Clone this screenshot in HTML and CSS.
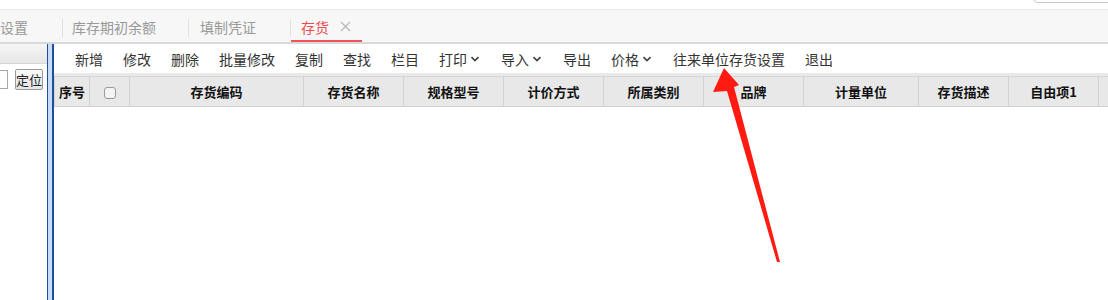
FILE: index.html
```html
<!DOCTYPE html>
<html lang="zh">
<head>
  <meta charset="UTF-8">
  <title>存货</title>
  <link rel="stylesheet" href="styles.css">
</head>
<body>
  <div class="topbar">
    <div class="search-box"></div>
  </div>

  <div class="tabs">
    <div class="tab first">设置</div>
    <span class="sep"></span>
    <div class="tab">库存期初余额</div>
    <span class="sep"></span>
    <div class="tab third">填制凭证</div>
    <span class="sep"></span>
    <div class="tab active">存货<svg class="close" width="11" height="11" viewBox="0 0 11 11"><path d="M1 1 L10 10 M10 1 L1 10" stroke="#bbb" stroke-width="1.4"/></svg></div>
  </div>

  <div class="workspace">
    <div class="side">
      <div class="side-head"></div>
      <div class="side-row">
        <input type="text" class="side-input">
        <button class="btn-locate">定位</button>
      </div>
    </div>

    <div class="splitter"></div>

    <div class="main">
      <div class="toolbar">
        <span class="tool">新增</span>
        <span class="tool">修改</span>
        <span class="tool">删除</span>
        <span class="tool">批量修改</span>
        <span class="tool">复制</span>
        <span class="tool">查找</span>
        <span class="tool">栏目</span>
        <span class="tool">打印<svg class="caret" width="11" height="6" viewBox="0 0 11 6"><path d="M1.5 1.2 L5 4.5 L8.5 1.2" fill="none" stroke="#444" stroke-width="1.7"/></svg></span>
        <span class="tool">导入<svg class="caret" width="11" height="6" viewBox="0 0 11 6"><path d="M1.5 1.2 L5 4.5 L8.5 1.2" fill="none" stroke="#444" stroke-width="1.7"/></svg></span>
        <span class="tool">导出</span>
        <span class="tool">价格<svg class="caret" width="11" height="6" viewBox="0 0 11 6"><path d="M1.5 1.2 L5 4.5 L8.5 1.2" fill="none" stroke="#444" stroke-width="1.7"/></svg></span>
        <span class="tool">往来单位存货设置</span>
        <span class="tool">退出</span>
      </div>

      <table class="grid">
        <colgroup>
          <col class="c-no">
          <col class="c-chk">
          <col class="c-code">
          <col class="c-100">
          <col class="c-100">
          <col class="c-100">
          <col class="c-100">
          <col class="c-100">
          <col class="c-unit">
          <col class="c-90">
          <col class="c-90">
          <col class="c-100">
        </colgroup>
        <thead>
          <tr>
            <th>序号</th>
            <th><span class="chk"></span></th>
            <th>存货编码</th>
            <th>存货名称</th>
            <th>规格型号</th>
            <th>计价方式</th>
            <th>所属类别</th>
            <th>品牌</th>
            <th>计量单位</th>
            <th>存货描述</th>
            <th>自由项1</th>
            <th></th>
          </tr>
        </thead>
      </table>
    </div>
  </div>

  <!-- 标注箭头 -->
  <svg class="arrow" width="1108" height="300" viewBox="0 0 1108 300">
    <polygon points="724,68 739,85 734,87 780,262 777,262 727,91 713,92" fill="#ff1a12"/>
  </svg>
</body>
</html>
```

FILE: styles.css
```css
body {
  margin: 0;
  font-family: "Noto Sans CJK SC", "Liberation Sans", sans-serif;
  background: #fff;
  overflow: hidden;
  height: 300px;
  position: relative;
}

.topbar {
  height: 9px;
  border-bottom: 1px solid #ececec;
  position: relative;
}

.search-box {
  position: absolute;
  right: -6px;
  top: -20px;
  width: 78px;
  height: 21px;
  border: 1px solid #ccc;
  border-radius: 3px;
}

.tabs {
  display: flex;
  align-items: center;
  height: 32px;
  background: #f7f7f7;
  border-bottom: 2px solid #d9d9d9;
  font-size: 14px;
  color: #999;
}

.tab {
  height: 32px;
  line-height: 34px;
  padding: 0 32px 0 9px;
  box-sizing: border-box;
  white-space: nowrap;
}

.tab.first {
  padding: 0 34px 0 0;
}

.tab.third {
  padding: 0 34px 0 11px;
}

.tab.active {
  display: flex;
  align-items: center;
  color: #f04a4f;
  padding: 2px 11px 0 10px;
  border-bottom: 2px solid #f0545a;
  height: 31px;
  margin-top: 1px;
}

.close {
  margin-left: 11px;
}

.sep {
  width: 1px;
  height: 18px;
  background: #e2e2e2;
  margin-top: 3px;
}

.workspace {
  display: flex;
  height: 257px;
}

.side {
  width: 47px;
  flex-shrink: 0;
  overflow: hidden;
}

.side-head {
  height: 19px;
  background: linear-gradient(#f6f6f6, #e6e6e6);
  border-bottom: 1px solid #d6d6d6;
}

.side-row {
  display: flex;
  align-items: center;
  margin-top: 5px;
}

.side-input {
  flex-shrink: 0;
  width: 20px;
  height: 17px;
  margin: 0 0 0 -14px;
  border: 1px solid #a8a8a8;
  padding: 0;
}

.btn-locate {
  flex-shrink: 0;
  margin-left: 7px;
  width: 28px;
  height: 21px;
  padding: 0;
  font-family: inherit;
  font-size: 13px;
  line-height: 19px;
  white-space: nowrap;
  color: #222;
  border: 1px solid #9a9a9a;
  border-radius: 2px;
  background: linear-gradient(#fafafa, #e4e4e4);
}

.splitter {
  flex-shrink: 0;
  width: 4px;
  background: #c9dcf6;
  border-left: 1px solid #1d4f9e;
  border-right: 2px solid #1d4f9e;
}

.main {
  flex: 1;
  min-width: 0;
  overflow: hidden;
}

.toolbar {
  display: flex;
  align-items: center;
  height: 29px;
  padding-left: 11px;
  border-bottom: 3px solid #e9e9e9;
  font-size: 14px;
  color: #333;
}

.tool {
  padding: 0 10px;
  display: flex;
  align-items: center;
  white-space: nowrap;
}

.caret {
  margin-left: 3px;
}

.grid {
  border-collapse: collapse;
  width: 1144px;
  table-layout: fixed;
}

.grid th {
  height: 29px;
  padding: 0;
  background: #e8e8e8;
  border: 1px solid #d2d2d2;
  border-top: 1px solid #d6d6d6;
  font-size: 13px;
  font-weight: bold;
  color: #111;
  text-align: center;
}

.c-no { width: 35px; }
.c-chk { width: 40px; }
.c-code { width: 174px; }
.c-100 { width: 100px; }
.c-unit { width: 115px; }
.c-90 { width: 90px; }

.chk {
  display: inline-block;
  width: 10px;
  height: 10px;
  border: 1px solid #9a9a9a;
  border-radius: 3px;
  background: #f4f4f4;
  vertical-align: middle;
}

.arrow {
  position: absolute;
  left: 0;
  top: 0;
  pointer-events: none;
}
```
